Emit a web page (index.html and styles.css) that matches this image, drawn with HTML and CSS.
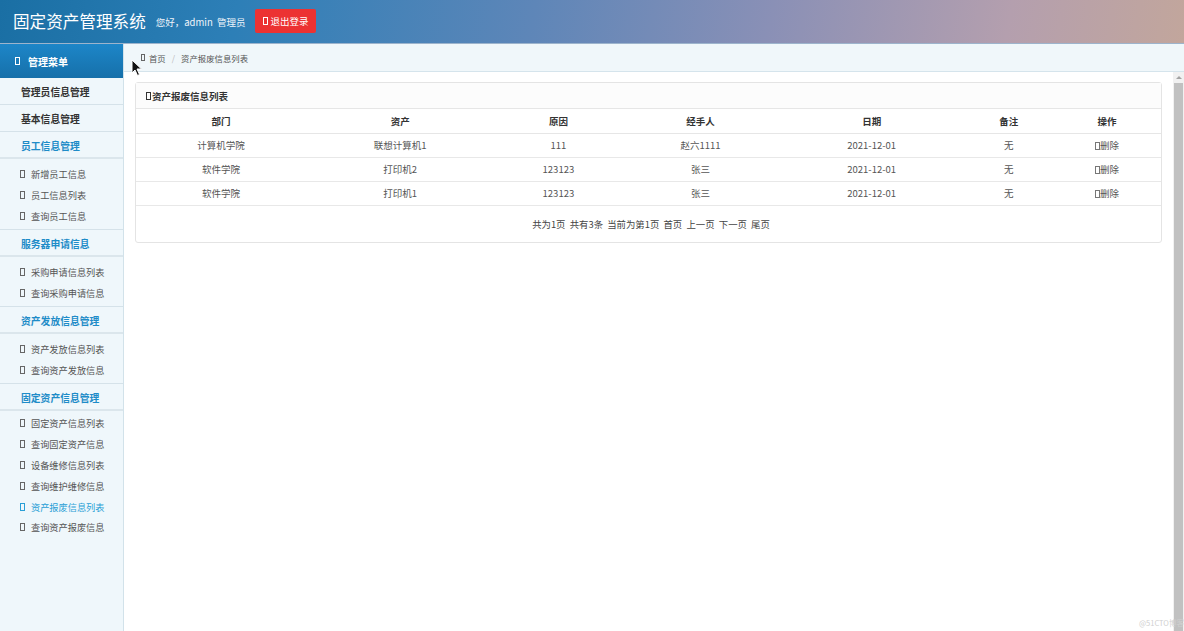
FILE: index.html
```html
<!DOCTYPE html>
<html lang="zh-CN">
<head>
<meta charset="utf-8">
<title>固定资产管理系统</title>
<link rel="stylesheet" href="styles.css">
</head>
<body>
<header class="topbar">
  <h1 class="brand">固定资产管理系统</h1>
  <span class="greet">您好，admin&nbsp;&nbsp;管理员</span>
  <button class="logout"><span class="tofu tofu-w"></span>退出登录</button>
</header>
<div class="frame">
  <aside class="sidebar">
    <div class="side-head"><span class="tofu tofu-w"></span>管理菜单</div>
    <div class="side-row">管理员信息管理</div>
    <div class="side-row">基本信息管理</div>
    <div class="side-row blue">员工信息管理</div>
    <ul class="sub">
      <li><span class="tofu"></span>新增员工信息</li>
      <li><span class="tofu"></span>员工信息列表</li>
      <li><span class="tofu"></span>查询员工信息</li>
    </ul>
    <div class="side-row blue">服务器申请信息</div>
    <ul class="sub">
      <li><span class="tofu"></span>采购申请信息列表</li>
      <li><span class="tofu"></span>查询采购申请信息</li>
    </ul>
    <div class="side-row blue">资产发放信息管理</div>
    <ul class="sub">
      <li><span class="tofu"></span>资产发放信息列表</li>
      <li><span class="tofu"></span>查询资产发放信息</li>
    </ul>
    <div class="side-row blue">固定资产信息管理</div>
    <ul class="sub last">
      <li><span class="tofu"></span>固定资产信息列表</li>
      <li><span class="tofu"></span>查询固定资产信息</li>
      <li><span class="tofu"></span>设备维修信息列表</li>
      <li><span class="tofu"></span>查询维护维修信息</li>
      <li class="active"><span class="tofu"></span>资产报废信息列表</li>
      <li><span class="tofu"></span>查询资产报废信息</li>
    </ul>
  </aside>
  <main class="main">
    <nav class="crumb"><span class="tofu"></span>首页<span class="sep">/</span>资产报废信息列表</nav>
    <div class="view">
      <div class="content">
        <section class="panel">
          <div class="panel-head"><span class="tofu dark"></span>资产报废信息列表</div>
          <table class="grid">
            <colgroup>
              <col class="c1"><col class="c2"><col class="c3"><col class="c4"><col class="c5"><col class="c6"><col class="c7">
            </colgroup>
            <thead>
              <tr><th>部门</th><th>资产</th><th>原因</th><th>经手人</th><th>日期</th><th>备注</th><th>操作</th></tr>
            </thead>
            <tbody>
              <tr><td>计算机学院</td><td>联想计算机1</td><td>111</td><td>赵六1111</td><td>2021-12-01</td><td>无</td><td><span class="tofu"></span>删除</td></tr>
              <tr><td>软件学院</td><td>打印机2</td><td>123123</td><td>张三</td><td>2021-12-01</td><td>无</td><td><span class="tofu"></span>删除</td></tr>
              <tr><td>软件学院</td><td>打印机1</td><td>123123</td><td>张三</td><td>2021-12-01</td><td>无</td><td><span class="tofu"></span>删除</td></tr>
            </tbody>
          </table>
          <div class="pager">共为1页&nbsp;&nbsp;共有3条&nbsp;&nbsp;当前为第1页&nbsp;&nbsp;首页&nbsp;&nbsp;上一页&nbsp;&nbsp;下一页&nbsp;&nbsp;尾页</div>
        </section>
      </div>
      <div class="scrollbar">
        <div class="sb-arrow"></div>
        <div class="sb-thumb"></div>
      </div>
    </div>
  </main>
</div>
<div class="watermark">@51CTO博客</div>
<svg class="cursor" width="12" height="18" viewBox="0 0 12 18"><path d="M1 1 L1 14 L4 11 L6.5 16.5 L8.5 15.5 L6 10 L10.5 10 Z" fill="#111" stroke="#fff" stroke-width="1"/></svg>
</body>
</html>
```
FILE: styles.css
```css
* { box-sizing: border-box; }
html, body {
  margin: 0;
  padding: 0;
  height: 631px;
  overflow: hidden;
}
body {
  font-family: "Noto Sans CJK SC", "Noto Sans", "Liberation Sans", sans-serif;
  font-size: 9.5px;
  color: #555;
  background: #fff;
  position: relative;
}
.tofu {
  display: inline-block;
  width: 5px;
  height: 8px;
  border: 1px solid #666;
  vertical-align: -1px;
  margin-right: 6px;
}
.tofu-w { border-color: #fff; margin-right: 2px; }
.tofu.dark { border-color: #333; margin-right: 1px; }

.topbar {
  height: 44px;
  display: flex;
  align-items: center;
  padding-left: 13px;
  background: linear-gradient(100deg, #1a6fa4 0%, #2d7fb7 20%, #5e86b8 45%, #8a90b6 65%, #b49fae 85%, #c2a69c 100%);
  border-bottom: 1px solid #9db4cc;
  color: #fff;
}
.brand {
  margin: 0 0 2px 0;
  font-size: 16.6px;
  font-weight: normal;
  letter-spacing: 0;
}
.greet {
  margin-left: 10px;
  font-size: 9.5px;
  color: #eef4fa;
}
.logout {
  margin-left: 10px;
  width: 61px;
  height: 24px;
  border: 0;
  border-radius: 2px;
  background: #ec3232;
  color: #fff;
  font-family: inherit;
  font-size: 9.5px;
  padding: 0;
  display: flex;
  align-items: center;
  justify-content: center;
  margin-bottom: 1px;
}

.frame {
  display: flex;
  height: 587px;
}
.sidebar {
  width: 124px;
  flex: none;
  background: #eff7fb;
  border-right: 1px solid #d2e2ea;
}
.side-head {
  height: 34px;
  display: flex;
  align-items: center;
  padding-left: 15px;
  background: linear-gradient(to bottom, #1d86c8, #1670aa);
  color: #fff;
  font-weight: bold;
  font-size: 10px;
}
.side-head .tofu { margin-right: 8px; }
.side-row {
  height: 27px;
  display: flex;
  align-items: center;
  padding-left: 21px;
  padding-top: 2px;
  border-bottom: 1px solid #d5e2e9;
  font-weight: bold;
  font-size: 9.8px;
  color: #333;
}
.side-row.blue { color: #1e8cc8; border-bottom: 2px solid #dbe6ec; }
.sub {
  list-style: none;
  margin: 0;
  padding: 4px 0 3px;
  border-bottom: 1px solid #d5e2e9;
}
.sub.last { border-bottom: 0; padding-top: 2px; }
.sub li {
  height: 21px;
  display: flex;
  align-items: center;
  padding-left: 20px;
  font-size: 9.2px;
  color: #555;
}
.sub.last li { height: 20.8px; }
.sub li .tofu { margin-right: 6px; }
.sub li.active { color: #2a9fd6; }
.sub li.active .tofu { border-color: #2a9fd6; }

.main {
  flex: 1;
  display: flex;
  flex-direction: column;
  min-width: 0;
}
.crumb {
  height: 28px;
  flex: none;
  display: flex;
  align-items: center;
  padding-left: 17px;
  background: #f0f7fa;
  border-bottom: 1px solid #d5e4ec;
  font-size: 8.4px;
  color: #555;
}
.crumb .tofu { width: 4px; height: 7px; margin-right: 4px; }
.crumb .sep { color: #bbb; margin: 0 6px; }
.view {
  flex: 1;
  display: flex;
  min-height: 0;
}
.content {
  flex: 1;
  padding: 10px 11px 0 11px;
}
.scrollbar {
  width: 11px;
  flex: none;
  background: #f1f1f1;
  display: flex;
  flex-direction: column;
  align-items: center;
}
.sb-arrow {
  margin-top: 4px;
  width: 0;
  height: 0;
  border-left: 3px solid transparent;
  border-right: 3px solid transparent;
  border-bottom: 3px solid #a3a3a3;
}
.sb-thumb {
  margin-top: 4px;
  width: 9px;
  flex: 1;
  background: #c1c1c1;
}

.panel {
  border: 1px solid #e4e4e4;
  border-radius: 3px;
  background: #fff;
}
.panel-head {
  height: 26px;
  display: flex;
  align-items: center;
  padding-left: 10px;
  border-bottom: 1px solid #e6e6e6;
  background: #fcfcfc;
  font-weight: bold;
  font-size: 9.5px;
  color: #333;
}
.grid {
  width: 100%;
  border-collapse: collapse;
  table-layout: fixed;
}
.c1 { width: 170px; }
.c2 { width: 188px; }
.c3 { width: 128px; }
.c4 { width: 156px; }
.c5 { width: 186px; }
.c6 { width: 88px; }
.c7 { width: 108px; }
.grid th, .grid td {
  height: 24px;
  padding: 0;
  text-align: center;
  vertical-align: middle;
  font-size: 9.5px;
}
.grid th {
  font-weight: bold;
  color: #333;
  border-bottom: 1px solid #e6e6e6;
}
.grid td {
  color: #555;
  border-bottom: 1px solid #e8e8e8;
}
.grid td .tofu { margin-right: 0; border-color: #777; width: 5px; height: 8px; }
.pager {
  height: 36px;
  display: flex;
  align-items: center;
  justify-content: center;
  padding-left: 5px;
  font-size: 9.4px;
  color: #444;
}

.watermark {
  position: absolute;
  left: 1139px;
  top: 617px;
  font-size: 7.5px;
  color: #cfcfcf;
}
.cursor {
  position: absolute;
  left: 131px;
  top: 59px;
}
```
